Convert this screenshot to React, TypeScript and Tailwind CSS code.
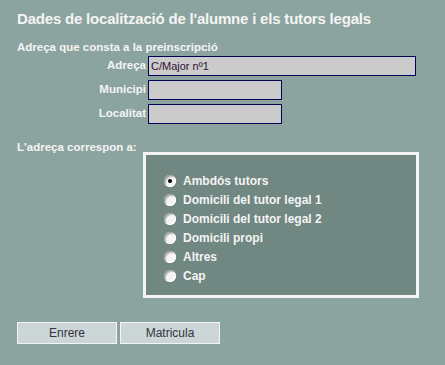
import React from "react";

const options = [
  "Ambdós tutors",
  "Domicili del tutor legal 1",
  "Domicili del tutor legal 2",
  "Domicili propi",
  "Altres",
  "Cap",
];

function Radio({ checked }: { checked?: boolean }) {
  return (
    <span className="relative inline-block w-[12px] h-[12px] rounded-full bg-[#f4f4f4] shadow-[inset_-1px_-1px_0_#ffffff,inset_1px_1px_0_#9a9a9a,inset_2px_2px_0_#c8c8c8]">
      {checked && (
        <span className="absolute left-[4px] top-[4px] w-[4px] h-[4px] rounded-full bg-black" />
      )}
    </span>
  );
}

export default function App() {
  return (
    <div
      className="w-[445px] h-[365px] bg-[#8ca49f] text-[#f4f4f4] overflow-hidden pl-[17px]"
      style={{ fontFamily: '"Liberation Sans", Arial, sans-serif' }}
    >
      <h1 className="pt-[10px] text-[15px] tracking-[-0.2px] font-bold leading-[18px]">
        Dades de localització de l'alumne i els tutors legals
      </h1>
      <div className="mt-[12px] text-[11.5px] font-bold leading-[14px]">
        Adreça que consta a la preinscripció
      </div>
      <div className="mt-[2px] flex flex-col gap-[4px]">
        {[
          { label: "Adreça", w: "w-[268px]", value: "C/Major nº1" },
          { label: "Municipi", w: "w-[134px]", value: "" },
          { label: "Localitat", w: "w-[134px]", value: "" },
        ].map((r) => (
          <div key={r.label} className="flex items-start">
            <div className="w-[129px] text-right text-[11.5px] font-bold leading-[14px] pt-[2px]">
              {r.label}
            </div>
            <div
              className={`ml-[2px] ${r.w} h-[20px] border border-[#000055] bg-[#cbcbcb] text-[#331133] text-[11px] leading-[18px] pl-[2px]`}
            >
              {r.value}
            </div>
          </div>
        ))}
      </div>
      <div className="mt-[16px] text-[11.5px] font-bold leading-[14px]">
        L'adreça correspon a:
      </div>
      <div className="ml-[126px] mt-[-2px] w-[276px] h-[146px] border-[3px] border-[#f4f4f4] bg-[#708782] pl-[18px] pt-[16px]">
        <div className="flex flex-col">
          {options.map((o, i) => (
            <div key={o} className="flex items-center h-[19px] gap-[7px]">
              <Radio checked={i === 0} />
              <span className="text-[12px] font-bold leading-[14px]">{o}</span>
            </div>
          ))}
        </div>
      </div>
      <div className="mt-[24px] flex gap-[3px]">
        <button className="w-[100px] h-[22px] border border-[#f4f4f4] bg-[#ccd6d6] text-[#333344] text-[12px] leading-[20px]">
          Enrere
        </button>
        <button className="w-[100px] h-[22px] border border-[#f4f4f4] bg-[#ccd6d6] text-[#333344] text-[12px] leading-[20px]">
          Matricula
        </button>
      </div>
    </div>
  );
}
